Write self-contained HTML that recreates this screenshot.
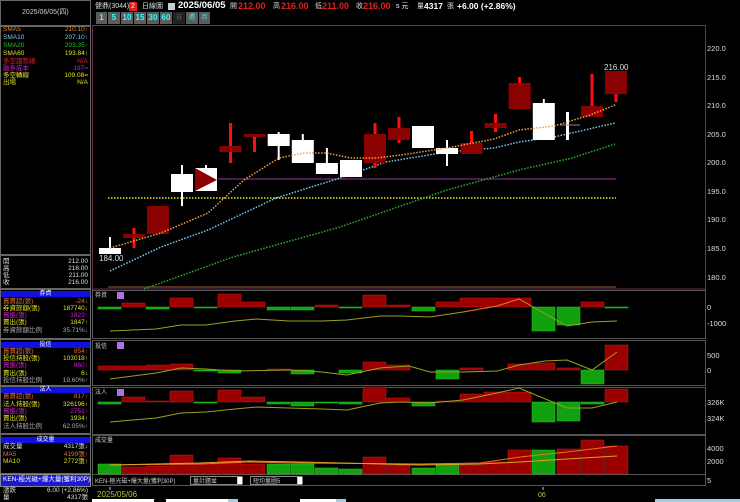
<!DOCTYPE html>
<html><head><meta charset="utf-8"><style>
*{margin:0;padding:0;box-sizing:border-box}
body{width:740px;height:502px;background:#000;overflow:hidden;position:relative;font-family:"Liberation Sans","Noto Sans CJK TC",sans-serif;font-size:7px;color:#ddd}
.a{position:absolute;white-space:nowrap;line-height:1}
.box{position:absolute;border:1px solid #666}
.row{position:absolute;left:3px;width:85px;height:7px;font-size:6.5px;line-height:7px;white-space:nowrap}
.row span{position:absolute;right:0;top:0}
.hd{position:absolute;left:1px;width:89px;height:6px;background:#1010e0;color:#fff;font-size:6px;line-height:6px;text-align:center}
.btn{position:absolute;top:12px;height:12px;background:#5c5c5c;color:#3ff;font-size:8px;line-height:12px;text-align:center;font-weight:bold}
</style></head><body>
<div class="box" style="left:0;top:0;width:91px;height:26px"></div>
<div class="a" style="left:22px;top:9px;font-size:7px;color:#ccc">2025/06/05(四)</div>
<div class="box" style="left:0;top:26px;width:91px;height:229px"></div>
<div class="row" style="top:26px;color:#e08a30">SMA5<span>210.10↑</span></div>
<div class="row" style="top:34px;color:#7ac8f0">SMA10<span>207.10↑</span></div>
<div class="row" style="top:42px;color:#22c022">SMA20<span>203.35↑</span></div>
<div class="row" style="top:50px;color:#e0e020">SMA60<span>193.84↑</span></div>
<div class="row" style="top:58px;color:#e02020">多空趨勢線<span>N/A</span></div>
<div class="row" style="top:65px;color:#d020d0">融多成本<span>197=</span></div>
<div class="row" style="top:72px;color:#e0e020">多空轉線<span>109.08=</span></div>
<div class="row" style="top:79px;color:#e0e020">出場<span>N/A</span></div>
<div class="box" style="left:0;top:255px;width:91px;height:34px"></div>
<div class="row" style="top:258px">開<span>212.00</span></div>
<div class="row" style="top:265px">高<span>216.00</span></div>
<div class="row" style="top:272px">低<span>211.00</span></div>
<div class="row" style="top:279px">收<span>216.00</span></div>

<div class="box" style="left:0;top:289px;width:91px;height:50px"></div>
<div class="hd" style="top:291px">券資</div>
<div class="row" style="top:298px;color:#e07030">買賣超(張)<span>-24↓</span></div>
<div class="row" style="top:305px;color:#e0e020">券資餘額(張)<span>187740↓</span></div>
<div class="row" style="top:312px;color:#d020d0">買進(張)<span>1823↑</span></div>
<div class="row" style="top:319px;color:#e0e020">賣出(張)<span>1847↑</span></div>
<div class="row" style="top:327px;color:#aaa">券資餘額比例<span>35.71%↓</span></div>

<div class="box" style="left:0;top:339px;width:91px;height:47px"></div>
<div class="hd" style="top:342px">投信</div>
<div class="row" style="top:348px;color:#e07030">買賣超(張)<span>854↑</span></div>
<div class="row" style="top:355px;color:#e0e020">投信持股(張)<span>103018↑</span></div>
<div class="row" style="top:362px;color:#d020d0">買進(張)<span>860↑</span></div>
<div class="row" style="top:370px;color:#e0e020">賣出(張)<span>6↓</span></div>
<div class="row" style="top:377px;color:#aaa">投信持股比例<span>19.60%↑</span></div>

<div class="box" style="left:0;top:386px;width:91px;height:48px"></div>
<div class="hd" style="top:387px">法人</div>
<div class="row" style="top:393px;color:#e07030">買賣超(張)<span>817↑</span></div>
<div class="row" style="top:401px;color:#e0e020">法人持股(張)<span>326196↑</span></div>
<div class="row" style="top:408px;color:#d020d0">買進(張)<span>2751↑</span></div>
<div class="row" style="top:415px;color:#e0e020">賣出(張)<span>1934↑</span></div>
<div class="row" style="top:423px;color:#aaa">法人持股比例<span>62.05%↑</span></div>

<div class="box" style="left:0;top:434px;width:91px;height:40px"></div>
<div class="hd" style="top:437px">成交量</div>
<div class="row" style="top:443px;color:#ddd">成交量<span>4317張↓</span></div>
<div class="row" style="top:451px;color:#e07030">MA5<span>4199張↑</span></div>
<div class="row" style="top:458px;color:#e0e020">MA10<span>2772張↑</span></div>
<div class="box" style="left:0;top:474px;width:91px;height:13px;background:#1a1ad0;border-color:#888"></div>
<div class="a" style="left:3px;top:477px;font-size:6.5px;color:#fff">KEN-極光磁+爆大量(獲利30P)</div>
<div class="row" style="top:487px">漲跌<span>6.00 (+2.86%)</span></div>
<div class="row" style="top:494px">量<span>4317張</span></div>

<div class="a" style="left:95px;top:3px;font-size:7px;color:#ddd">健鼎(3044)</div>
<div class="a" style="left:129px;top:2px;width:8px;height:9px;background:#e02020;color:#fff;font-size:7px;text-align:center;line-height:9px">2</div>
<div class="a" style="left:142px;top:3px;font-size:7px">日線圖</div>
<div class="a" style="left:168px;top:3px;width:7px;height:7px;background:#ccc"></div>
<div class="a" style="left:178px;top:1px;font-size:9.5px;font-weight:bold;color:#fff">2025/06/05</div>
<div class="a" style="left:230px;top:3px;font-size:7px">開</div>
<div class="a" style="left:238px;top:2px;font-size:9px;font-weight:bold;color:#e02020">212.00</div>
<div class="a" style="left:273px;top:3px;font-size:7px">高</div>
<div class="a" style="left:281px;top:2px;font-size:9px;font-weight:bold;color:#e02020">216.00</div>
<div class="a" style="left:315px;top:3px;font-size:7px">低</div>
<div class="a" style="left:322px;top:2px;font-size:9px;font-weight:bold;color:#e02020">211.00</div>
<div class="a" style="left:356px;top:3px;font-size:7px">收</div>
<div class="a" style="left:363px;top:2px;font-size:9px;font-weight:bold;color:#e02020">216.00</div>
<div class="a" style="left:396px;top:3px;font-size:7px;color:#fff">s 元</div>
<div class="a" style="left:417px;top:3px;font-size:7px">量</div>
<div class="a" style="left:424px;top:2px;font-size:8.5px;font-weight:bold;color:#fff">4317</div>
<div class="a" style="left:447px;top:3px;font-size:7px">張</div>
<div class="a" style="left:457px;top:2px;font-size:8.5px;font-weight:bold;color:#fff">+6.00 (+2.86%)</div>

<div class="btn" style="left:96px;width:11px">1</div>
<div class="btn" style="left:108px;width:12px">5</div>
<div class="btn" style="left:121px;width:12px">10</div>
<div class="btn" style="left:134px;width:12px">15</div>
<div class="btn" style="left:147px;width:12px">30</div>
<div class="btn" style="left:160px;width:12px">60</div>
<div class="btn" style="left:173px;width:12px;background:#222;color:#666;font-weight:normal;font-size:6px">日</div>
<div class="btn" style="left:186px;width:12px;font-weight:normal;font-size:6px">週</div>
<div class="btn" style="left:199px;width:11px;font-weight:normal;font-size:6px">月</div>

<svg width="740" height="502" style="position:absolute;left:0;top:0" font-family="Liberation Sans, sans-serif">
<g fill="none" stroke="#6a3050" stroke-width="1">
<path d="M92.5 25.5H705.5V290"/>
<line x1="92.5" y1="25" x2="92.5" y2="290"/>
</g>
<g fill="none" stroke="#555" stroke-width="1">
<rect x="92.5" y="290.5" width="613" height="48"/>
<rect x="92.5" y="340.5" width="613" height="45"/>
<rect x="92.5" y="387.5" width="613" height="47"/>
<rect x="92.5" y="435.5" width="613" height="39"/>
<rect x="92.5" y="474.5" width="613" height="11"/>
</g>
<line x1="92" y1="289" x2="705" y2="289" stroke="#6a3050"/>
<line x1="108" y1="287" x2="616" y2="287" stroke="#a06030" stroke-width="1"/>
<g fill="#ddd" font-size="7.5">
<text x="707" y="51">220.0</text><text x="707" y="80">215.0</text><text x="707" y="108">210.0</text>
<text x="707" y="137">205.0</text><text x="707" y="165">200.0</text><text x="707" y="194">195.0</text>
<text x="707" y="222">190.0</text><text x="707" y="251">185.0</text><text x="707" y="280">180.0</text>
<text x="707" y="310">0</text><text x="707" y="326">-1000</text>
<text x="707" y="358">500</text><text x="707" y="373">0</text>
<text x="707" y="405">326K</text><text x="707" y="421">324K</text>
<text x="707" y="451">4000</text><text x="707" y="464">2000</text>
<text x="707" y="483">5</text>
</g>
<line x1="218" y1="179" x2="616" y2="179" stroke="#9a30a0" stroke-width="1"/>
<line x1="108" y1="198" x2="616" y2="198" stroke="#e8e820" stroke-width="1.5" stroke-dasharray="1.5 1.5"/>
<polyline fill="none" stroke="#7ac8f0" stroke-width="1.5" stroke-dasharray="1.5 1.5" points="110,271 161,247 208,230 276,198 340,178 386,162 447,152 494,148 519,142 554,137 615,123"/>
<polyline fill="none" stroke="#2ab02a" stroke-width="1.5" stroke-dasharray="1.5 1.5" points="144,289 233,257 340,227 447,190 519,170 572,158 615,144"/>
<g fill="#ff1010">
<rect x="132.5" y="228" width="3" height="20"/><rect x="229" y="123" width="3" height="40"/>
<rect x="253" y="134" width="3" height="18"/><rect x="373.5" y="123" width="3" height="45"/>
<rect x="397.5" y="117" width="3" height="26"/><rect x="470" y="131" width="3" height="12"/>
<rect x="494" y="114" width="3" height="18"/><rect x="518" y="77" width="3" height="10"/>
<rect x="590.5" y="74" width="3" height="32"/><rect x="614.5" y="90" width="3" height="12"/>
</g>
<g fill="#fff">
<rect x="109" y="237" width="2" height="12"/><rect x="181" y="165" width="2" height="41"/>
<rect x="277.7" y="132" width="2" height="28"/><rect x="301.8" y="134" width="2" height="28"/>
<rect x="325.9" y="148" width="2" height="16"/><rect x="446" y="140" width="2" height="26"/>
<rect x="542.8" y="99" width="2" height="6"/><rect x="566" y="112" width="3" height="28"/>
<rect x="205" y="165" width="2" height="4"/>
</g>
<rect x="99" y="248" width="22" height="6" fill="#fff"/>
<rect x="123" y="234" width="22" height="4" fill="#8b0000"/>
<rect x="147" y="206" width="22" height="28" fill="#8b0000"/>
<rect x="171" y="174" width="22" height="18" fill="#fff"/>
<rect x="195" y="168" width="22" height="23" fill="#fff"/>
<polygon points="195,168 217,180 195,191" fill="#8b0000"/>
<rect x="219.5" y="146" width="22" height="6" fill="#8b0000"/>
<rect x="243.6" y="134" width="22" height="3" fill="#8b0000"/>
<rect x="267.7" y="134" width="22" height="12" fill="#fff"/>
<rect x="291.8" y="140" width="22" height="23" fill="#fff"/>
<rect x="315.9" y="163" width="22" height="11" fill="#fff"/>
<rect x="340" y="160" width="22" height="17" fill="#fff"/>
<rect x="364" y="134" width="22" height="29" fill="#8b0000"/>
<rect x="388" y="128" width="22" height="12" fill="#8b0000"/>
<rect x="412" y="126" width="22" height="22" fill="#fff"/>
<rect x="436" y="148" width="22" height="6" fill="#fff"/>
<rect x="460.5" y="143" width="22" height="11" fill="#8b0000"/>
<rect x="484.6" y="123" width="22" height="5" fill="#8b0000"/>
<rect x="508.7" y="83" width="22" height="26" fill="#8b0000"/>
<rect x="532.8" y="103" width="22" height="37" fill="#fff"/>
<line x1="560" y1="125" x2="580" y2="125" stroke="#888"/>
<rect x="581" y="106" width="22" height="11" fill="#8b0000"/>
<rect x="605" y="71" width="22" height="23" fill="#8b0000"/>
<polyline fill="none" stroke="#f0a040" stroke-width="1.5" stroke-dasharray="1.5 1.5" points="110,248 161,233 208,213 244,180 279,158 304,153 326,153 351,158 376,158 401,155 447,148 494,139 519,130 554,126 590,115 615,105"/>
<text x="99" y="261" fill="#ddd" font-size="8">184.00</text>
<text x="604" y="70" fill="#ddd" font-size="8">216.00</text>

<g fill="#ccc" font-size="6"><text x="95" y="297">券資</text><text x="95" y="348">投信</text><text x="95" y="394">法人</text><text x="95" y="442">成交量</text></g>
<g fill="#b070e0"><rect x="117" y="292" width="7" height="7"/><rect x="117" y="342" width="7" height="7"/><rect x="117" y="389" width="7" height="7"/></g>

<g fill="#9a0000" stroke="#c02020" stroke-width="0.5">
<rect x="122" y="303" width="23" height="4"/><rect x="170" y="298" width="23" height="9"/><rect x="218" y="294" width="23" height="13"/>
<rect x="242" y="302" width="23" height="5"/><rect x="315" y="305" width="23" height="2"/><rect x="363" y="295" width="23" height="12"/>
<rect x="387" y="305" width="23" height="2"/><rect x="436" y="302" width="23" height="5"/><rect x="460" y="298" width="23" height="9"/>
<rect x="484" y="298" width="23" height="9"/><rect x="508" y="298" width="23" height="9"/><rect x="581" y="302" width="23" height="5"/>
</g>
<g fill="#10a010" stroke="#20d020" stroke-width="0.5">
<rect x="98" y="307" width="23" height="2"/><rect x="146" y="307" width="23" height="2"/><rect x="194" y="307" width="23" height="1"/>
<rect x="267" y="307" width="23" height="3"/><rect x="291" y="307" width="23" height="3"/><rect x="339" y="307" width="23" height="1"/>
<rect x="412" y="307" width="23" height="4"/><rect x="532" y="307" width="23" height="24"/><rect x="557" y="307" width="23" height="18"/>
<rect x="605" y="307" width="23" height="1"/>
</g>
<polyline fill="none" stroke="#a0a020" stroke-width="1" points="110,331 156,329 181,325 206,325 235,321 256,319 289,321 322,321 347,320 380,316 401,316 430,317 463,312 497,306 519,299 567,326 592,322 617,321"/>
<polyline fill="none" stroke="#f06020" stroke-width="1" points="463,312 497,306 519,299"/>
<g fill="#9a0000" stroke="#c02020" stroke-width="0.5">
<rect x="98" y="366" width="23" height="4"/><rect x="122" y="366" width="23" height="4"/><rect x="146" y="365" width="23" height="5"/>
<rect x="170" y="364" width="23" height="6"/><rect x="267" y="369" width="23" height="1"/><rect x="363" y="362" width="23" height="8"/>
<rect x="387" y="365" width="23" height="5"/><rect x="460" y="368" width="23" height="2"/><rect x="508" y="364" width="23" height="6"/>
<rect x="532" y="363" width="23" height="7"/><rect x="557" y="368" width="23" height="2"/><rect x="605" y="345" width="23" height="25"/>
</g>
<g fill="#10a010" stroke="#20d020" stroke-width="0.5">
<rect x="194" y="370" width="23" height="1"/><rect x="218" y="370" width="23" height="3"/><rect x="291" y="370" width="23" height="4"/>
<rect x="339" y="370" width="23" height="3"/><rect x="436" y="370" width="23" height="9"/><rect x="581" y="370" width="23" height="14"/>
</g>
<polyline fill="none" stroke="#a0a020" stroke-width="1" points="110,379 156,373 181,368 206,369 235,371 289,370 322,372 347,375 380,368 409,366 430,372 463,372 497,371 519,365 545,361 567,360 592,370 617,352"/>
<g fill="#9a0000" stroke="#c02020" stroke-width="0.5">
<rect x="122" y="397" width="23" height="5"/><rect x="146" y="401" width="23" height="1"/><rect x="170" y="391" width="23" height="11"/>
<rect x="218" y="390" width="23" height="12"/><rect x="242" y="397" width="23" height="5"/><rect x="363" y="387" width="23" height="15"/>
<rect x="387" y="398" width="23" height="4"/><rect x="460" y="394" width="23" height="8"/><rect x="484" y="392" width="23" height="10"/>
<rect x="508" y="392" width="23" height="10"/><rect x="605" y="389" width="23" height="13"/><rect x="436" y="401" width="23" height="1"/>
</g>
<g fill="#10a010" stroke="#20d020" stroke-width="0.5">
<rect x="98" y="402" width="23" height="2"/><rect x="194" y="402" width="23" height="1"/><rect x="267" y="402" width="23" height="2"/>
<rect x="291" y="402" width="23" height="4"/><rect x="315" y="402" width="23" height="1"/><rect x="339" y="402" width="23" height="2"/>
<rect x="412" y="402" width="23" height="4"/><rect x="532" y="402" width="23" height="20"/><rect x="557" y="402" width="23" height="19"/>
<rect x="581" y="402" width="23" height="2"/>
</g>
<polyline fill="none" stroke="#a0a020" stroke-width="1" points="110,422 156,418 181,413 206,412 235,409 256,407 289,408 322,409 347,410 380,403 401,402 430,403 463,400 497,393 519,388 567,408 592,408 617,402"/>
<g fill="#9a0000" stroke="#c02020" stroke-width="0.5">
<rect x="122" y="467" width="23" height="7"/><rect x="146" y="466" width="23" height="8"/><rect x="170" y="455" width="23" height="19"/>
<rect x="194" y="464" width="23" height="10"/><rect x="218" y="458" width="23" height="16"/><rect x="242" y="464" width="23" height="10"/>
<rect x="363" y="457" width="23" height="17"/><rect x="387" y="465" width="23" height="9"/><rect x="460" y="465" width="23" height="9"/>
<rect x="484" y="462" width="23" height="12"/><rect x="508" y="450" width="23" height="24"/><rect x="557" y="449" width="23" height="25"/>
<rect x="581" y="440" width="23" height="34"/><rect x="605" y="446" width="23" height="28"/>
</g>
<g fill="#10a010" stroke="#20d020" stroke-width="0.5">
<rect x="98" y="464" width="23" height="10"/><rect x="267" y="464" width="23" height="10"/><rect x="291" y="464" width="23" height="10"/>
<rect x="315" y="468" width="23" height="6"/><rect x="339" y="469" width="23" height="5"/><rect x="412" y="468" width="23" height="6"/>
<rect x="436" y="464" width="23" height="10"/><rect x="532" y="450" width="23" height="24"/>
</g>
<polyline fill="none" stroke="#f07020" stroke-width="1" points="110,465 200,464 250,462 300,463 420,464 480,463 520,457 567,452 617,446"/>
<polyline fill="none" stroke="#e0a020" stroke-width="1" points="110,465 200,463 250,461 300,462 420,465 480,464 520,462 567,459 617,456"/>
<text x="95" y="483" fill="#ccc" font-size="6">KEN-極光磁+爆大量(獲利30P)</text>
<rect x="190.5" y="476.5" width="47" height="8" fill="#000" stroke="#888"/><text x="193" y="483" fill="#ccc" font-size="6">量計題並</text>
<rect x="237.5" y="476.5" width="5" height="8" fill="#fff"/>
<rect x="250.5" y="476.5" width="47" height="8" fill="#000" stroke="#888"/><text x="253" y="483" fill="#ccc" font-size="6">短均量圖5</text>
<rect x="297.5" y="476.5" width="5" height="8" fill="#fff"/>
<line x1="110" y1="487" x2="110" y2="490" stroke="#ccc"/><line x1="543" y1="487" x2="543" y2="490" stroke="#ccc"/>
<text x="97" y="497" fill="#c0c040" font-size="8">2025/05/06</text>
<text x="538" y="497" fill="#c0c040" font-size="7">06</text>
<rect x="92" y="499" width="62" height="3" fill="#fff"/><rect x="166" y="499" width="62" height="3" fill="#fff"/>
<rect x="228" y="499" width="10" height="3" fill="#a0d0e8"/>
<rect x="300" y="499" width="36" height="3" fill="#fff"/><rect x="336" y="499" width="10" height="3" fill="#a0d0e8"/>
<rect x="655" y="499" width="85" height="3" fill="#a0d0e8"/>
</svg>
</body></html>
